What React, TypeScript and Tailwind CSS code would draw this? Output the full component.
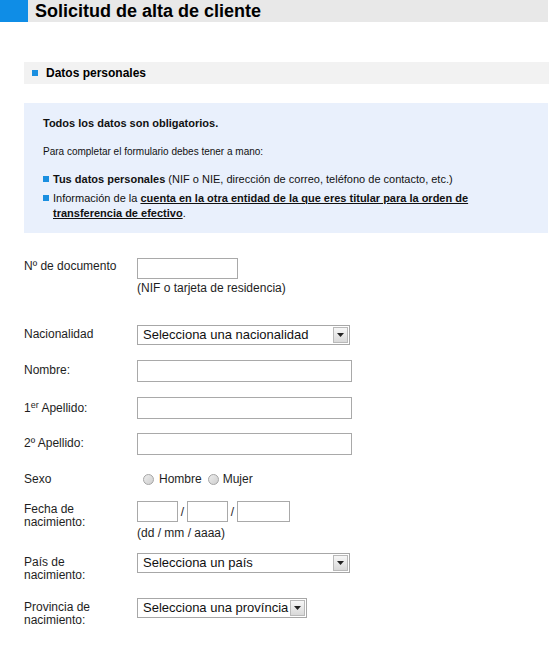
import React from 'react';

const font = "font-['Liberation_Sans',Arial,sans-serif]";

const Select = ({ text, width }: { text: string; width: string }) => (
  <div className={`relative h-[20px] ${width} border border-[#a7a7a7] bg-white`}>
    <div className="pl-[5px] text-[13px] leading-[18px] text-[#111] whitespace-nowrap">{text}</div>
    <span className="absolute right-[1px] top-[1px] flex h-[16px] w-[15px] items-center justify-center border border-[#b9b9b9] bg-gradient-to-b from-[#f7f7f7] to-[#d9d9d9]">
      <svg width="7" height="4" viewBox="0 0 7 4">
        <path d="M0 0h7L3.5 4z" fill="#222" />
      </svg>
    </span>
  </div>
);

const Input = ({ width, height = 'h-[22px]' }: { width: string; height?: string }) => (
  <div className={`${width} ${height} border border-[#a9a9a9] bg-white`} />
);

const Radio = () => (
  <span className="inline-block h-[11px] w-[11px] rounded-full border border-[#a5a5a5] bg-gradient-to-br from-[#ededed] to-[#cfcfcf]" />
);

const Bullet = () => <span className="mt-[4px] inline-block h-[6px] w-[6px] shrink-0 bg-[#1a8fe0]" />;

export default function App() {
  return (
    <div className={`${font} min-h-[646px] w-[551px] bg-white text-[12px] text-[#1e1e1e]`}>
      {/* Page title */}
      <div className="flex h-[22px] w-[548px]">
        <div className="w-[28px] bg-[#0f8de6]" />
        <div className="flex-1 bg-[#e8e8e8] pl-[7px] text-[18px] font-bold leading-[22px] text-black">
          Solicitud de alta de cliente
        </div>
      </div>

      {/* Section header */}
      <div className="ml-[24px] mt-[40px] flex h-[22px] w-[525px] items-center bg-[#f2f2f2] pl-[8px]">
        <span className="mr-[8px] h-[6px] w-[6px] bg-[#1a8fe0]" />
        <span className="font-bold leading-[14px] text-black">Datos personales</span>
      </div>

      {/* Info box */}
      <div className="ml-[24px] mt-[19px] h-[130px] w-[524px] bg-[#e9f0fc] pl-[19px] pr-[22px] pt-[13px] text-[11px] text-[#111]">
        <p className="font-bold leading-[14px]">Todos los datos son obligatorios.</p>
        <p className="mt-[15px] text-[10px] leading-[13px]">Para completar el formulario debes tener a mano:</p>
        <div className="mt-[14px] flex gap-[4px] leading-[14px]">
          <Bullet />
          <p>
            <b>Tus datos personales</b> (NIF o NIE, dirección de correo, teléfono de contacto, etc.)
          </p>
        </div>
        <div className="mt-[5px] flex gap-[4px] leading-[15px]">
          <Bullet />
          <p>
            Información de la{' '}
            <b className="underline">cuenta en la otra entidad de la que eres titular para la orden de transferencia de efectivo</b>.
          </p>
        </div>
      </div>

      {/* Form */}
      <div className="ml-[24px] leading-[14px]">
        <div className="mt-[25px] flex">
          <div className="w-[113px] shrink-0 pt-[1px]">Nº de documento</div>
          <div>
            <Input width="w-[101px]" height="h-[21px]" />
            <div className="mt-[2px]">(NIF o tarjeta de residencia)</div>
          </div>
        </div>

        <div className="mt-[30px] flex items-center">
          <div className="w-[113px] shrink-0 pb-[3px]">Nacionalidad</div>
          <Select text="Selecciona una nacionalidad" width="w-[213px]" />
        </div>

        <div className="mt-[15px] flex items-center">
          <div className="w-[113px] shrink-0 pb-[3px]">Nombre:</div>
          <Input width="w-[215px]" />
        </div>

        <div className="mt-[15px] flex items-center">
          <div className="w-[113px] shrink-0">
            1<sup className="text-[9px]">er</sup> Apellido:
          </div>
          <Input width="w-[215px]" />
        </div>

        <div className="mt-[14px] flex items-center">
          <div className="w-[113px] shrink-0 pb-[2px]">2º Apellido:</div>
          <Input width="w-[215px]" />
        </div>

        <div className="mt-[16px] flex h-[16px] items-center">
          <div className="w-[113px] shrink-0">Sexo</div>
          <div className="flex items-center pl-[6px]">
            <Radio />
            <span className="ml-[5px]">Hombre</span>
            <span className="ml-[6px] flex">
              <Radio />
            </span>
            <span className="ml-[4px]">Mujer</span>
          </div>
        </div>

        <div className="mt-[14px] flex">
          <div className="w-[113px] shrink-0 pt-[2px] leading-[13px]">
            Fecha de
            <br />
            nacimiento:
          </div>
          <div>
            <div className="flex items-center">
              <Input width="w-[41px]" height="h-[21px]" />
              <span className="w-[9px] text-center">/</span>
              <Input width="w-[41px]" height="h-[21px]" />
              <span className="w-[9px] text-center">/</span>
              <Input width="w-[53px]" height="h-[21px]" />
            </div>
            <div className="mt-[4px]">(dd / mm / aaaa)</div>
          </div>
        </div>

        <div className="mt-[13px] flex">
          <div className="w-[113px] shrink-0 pt-[3px] leading-[13px]">
            País de
            <br />
            nacimiento:
          </div>
          <Select text="Selecciona un país" width="w-[213px]" />
        </div>

        <div className="mt-[16px] flex">
          <div className="w-[113px] shrink-0 pt-[3px] leading-[13px]">
            Provincia de
            <br />
            nacimiento:
          </div>
          <Select text="Selecciona una província" width="w-[170px]" />
        </div>
      </div>
    </div>
  );
}
